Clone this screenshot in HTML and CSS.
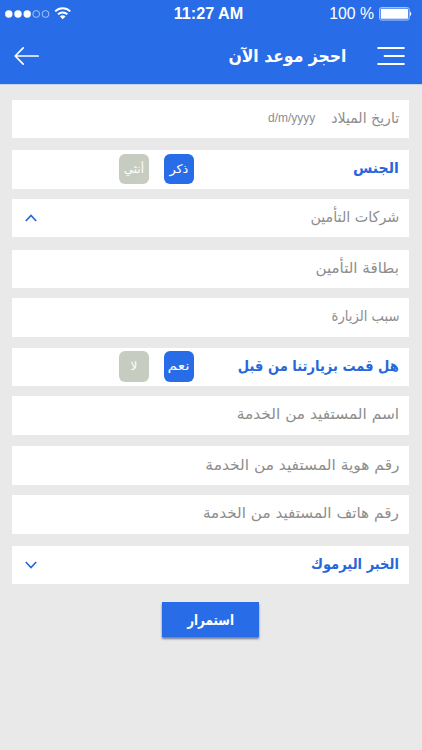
FILE: index.html
```html
<!DOCTYPE html>
<html lang="ar" dir="rtl">
<head>
<meta charset="utf-8">
<title>احجز موعد الآن</title>
<link rel="stylesheet" href="styles.css">
</head>
<body>
<header class="top">
  <div class="status" dir="ltr">
    <svg class="signal" width="68" height="16" viewBox="0 0 68 16">
      <g fill="#fff"><circle cx="3.8" cy="8" r="3.7"/><circle cx="13" cy="8" r="3.7"/><circle cx="22.2" cy="8" r="3.7"/></g>
      <g fill="none" stroke="#b4cef8" stroke-width=".9"><circle cx="31.2" cy="8" r="3.4"/><circle cx="40.5" cy="8" r="3.4"/></g>
      <g fill="none" stroke="#fff" stroke-width="1.9"><path d="M50.2 5.4a10.6 10.6 0 0 1 15 0"/><path d="M53 8.4a6.6 6.6 0 0 1 9.4 0"/></g>
      <path d="M54.9 10.4a3.9 3.9 0 0 1 5.6 0L57.7 13.3z" fill="#fff"/>
    </svg>
    <span class="time">11:27 AM</span>
    <span class="power"><span class="percent">100 %</span>
      <svg width="33" height="14" viewBox="0 0 33 14"><rect x=".6" y=".6" width="29.6" height="12.4" rx="1.8" fill="none" stroke="#b4cef8" stroke-width="1"/><rect x="1.8" y="1.8" width="27.2" height="10" rx=".6" fill="#fff"/><path d="M31 4.4q2.6 2.3 0 4.6z" fill="#fff"/></svg>
    </span>
  </div>
  <div class="bar">
    <svg class="menu" width="28" height="20" viewBox="0 0 28 20" fill="none" stroke="#fff" stroke-width="2" stroke-linecap="round"><path d="M1.2 2H26.8M7.6 10H26.8M1.2 18H26.8"/></svg>
    <h1><span class="t t-title">احجز موعد الآن</span></h1>
    <svg class="back" width="26" height="20" viewBox="0 0 26 20" fill="none" stroke="#fff" stroke-width="1.7" stroke-linecap="round" stroke-linejoin="round"><path d="M24.2 10H1.4M9.2 1.8L1.2 10l8 8.2"/></svg>
  </div>
</header>
<main class="form">
  <div class="row"><span class="t t-birth">تاريخ الميلاد</span><span class="format" dir="ltr">d/m/yyyy</span></div>
  <div class="row strong"><span class="t t-sex">الجنس</span><div class="choices"><button class="choice on"><span class="t t-male">ذكر</span></button><button class="choice"><span class="t t-female">أنثي</span></button></div></div>
  <div class="row"><span class="t t-companies">شركات التأمين</span><svg class="chev" width="12" height="8" viewBox="0 0 12 8"><path d="M.8 7L6 1.4 11.2 7"/></svg></div>
  <div class="row"><span class="t t-card">بطاقة التأمين</span></div>
  <div class="row"><span class="t t-reason">سبب الزيارة</span></div>
  <div class="row strong"><span class="t t-visited">هل قمت بزيارتنا من قبل</span><div class="choices"><button class="choice on"><span class="t t-yes">نعم</span></button><button class="choice"><span class="t t-no">لا</span></button></div></div>
  <div class="row"><span class="t t-name">اسم المستفيد من الخدمة</span></div>
  <div class="row"><span class="t t-id">رقم هوية المستفيد من الخدمة</span></div>
  <div class="row"><span class="t t-phone">رقم هاتف المستفيد من الخدمة</span></div>
  <div class="row strong"><span class="t t-branch">الخبر اليرموك</span><svg class="chev" width="12" height="8" viewBox="0 0 12 8"><path d="M.8 1L6 6.6 11.2 1"/></svg></div>
  <button class="submit"><span class="t t-go">استمرار</span></button>
</main>
</body>
</html>
```
FILE: styles.css
```css
* { box-sizing: border-box; }
body { margin: 0; width: 422px; height: 750px; overflow: hidden; background: #e9e9e9; font-family: "DejaVu Sans", sans-serif; color: #8e8e8e; }
button { border: 0; padding: 0; font: inherit; color: #fff; display: flex; align-items: center; justify-content: center; }

/* Header */
.top { height: 85px; background: #286de7; color: #fff; border-bottom: 1px solid #c5d3ec; }
.status { height: 28px; display: grid; grid-template-columns: 1fr auto 1fr; align-items: center; padding: 0 10px 0 5px; font-family: "Liberation Sans", sans-serif; }
.time { font-size: 16.2px; font-weight: 700; padding-bottom: 1px; }
.power { display: flex; justify-content: flex-end; align-items: center; gap: 5px; }
.percent { font-size: 15.8px; }
.bar { height: 56px; display: flex; align-items: center; padding: 0 17px 0 14px; }
h1 { margin: 0 31px 0 0; font-size: 17px; flex: 1; line-height: 24px; }

/* Form rows */
.form { padding: 14.8px 12.6px 0 11.7px; display: flex; flex-direction: column; }
.row { height: 38.6px; background: #fff; display: flex; align-items: center; padding: 0 10.4px 0 14px; margin-bottom: 10px; font-size: 15px; line-height: 20px; }
.row:nth-child(1) { margin-bottom: 11.8px; }
.row:nth-child(3), .row:nth-child(9) { margin-bottom: 12.2px; }
.row:nth-child(5) { margin-bottom: 10.8px; }
.row:nth-child(7) { margin-bottom: 11.6px; }
.row:nth-child(10) { margin-bottom: 18px; }
.row > .t { margin-bottom: 2px; }
.strong { color: #2767db; font-weight: 700; }
.format { font: 12px "Liberation Sans", sans-serif; margin-right: 11.5px; margin-bottom: 3px; }
.choices { display: flex; gap: 14.5px; margin-right: auto; margin-left: 93px; margin-bottom: 1px; font-weight: 400; }
.choice { width: 30.4px; height: 30.6px; border-radius: 6px; background: #c7ccc0; font-size: 12px; }
.choice.on { background: #286de7; }
.chev { margin-right: auto; margin-left: -.5px; fill: none; stroke: #2767db; stroke-width: 1.7; }
.submit { align-self: center; width: 97px; height: 35px; background: #286de7; font-size: 15px; font-weight: 700; box-shadow: 0 2px 2px rgba(50, 65, 100, .65); }

/* Horizontal proportions of each label */
.t { display: inline-block; white-space: nowrap; transform-origin: right center; }
.choice .t, .submit .t { transform-origin: center; }
.t-title { transform: scaleX(.919); }
.t-birth { transform: scaleX(.942); }
.t-sex { transform: scaleX(.94); }
.t-companies { transform: scaleX(.953); }
.t-card { transform: scaleX(1.007); }
.t-reason { transform: scaleX(.877); }
.t-visited { transform: scaleX(.871); }
.t-name { transform: scaleX(1.027); }
.t-id { transform: scaleX(1.03); }
.t-phone { transform: scaleX(1.016); }
.t-branch { transform: scaleX(.872); }
.t-go { transform: scaleX(.79); }
.t-male { transform: scaleX(1.07); }
.t-yes { transform: scaleX(1.3); }
```
